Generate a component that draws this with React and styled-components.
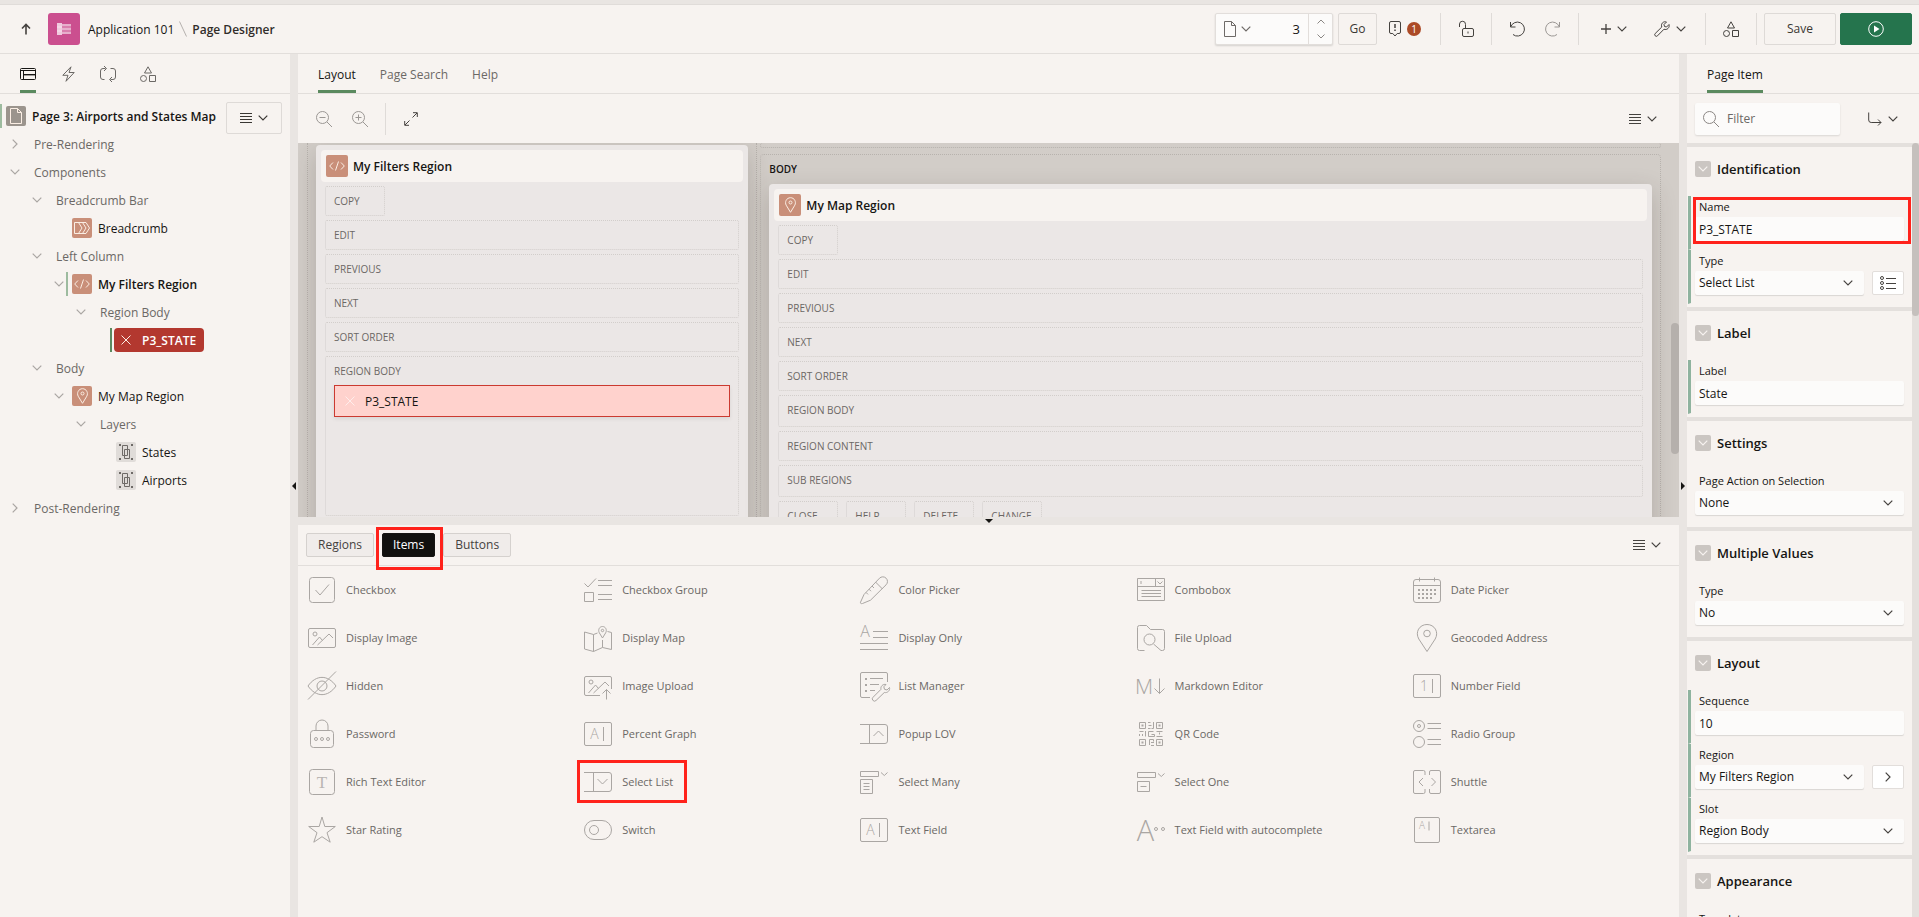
import React from 'react';
import styled, { createGlobalStyle, css } from 'styled-components';

const Global = createGlobalStyle`
  *, *::before, *::after { box-sizing: border-box; }
  html, body, #root { height: 100%; }
  body { margin: 0; overflow: hidden; background: #e9e5e2; }
  body, button, input, select {
    font-family: 'Open Sans', 'Noto Sans', sans-serif;
    font-size: 12px;
    line-height: 16px;
    color: #161513;
  }
  button { background: none; border: 0; padding: 0; cursor: pointer; }
  ul { list-style: none; margin: 0; padding: 0; }
  h2, h3 { margin: 0; }
  svg { display: block; flex: none; overflow: visible; }
`;

/* ---------- icons ---------- */

const Svg = ({ w = 16, h = w, children, sw = 1, ...rest }) => (
  <svg width={w} height={h} viewBox={`0 0 ${w} ${h}`} fill="none" stroke="currentColor" strokeWidth={sw} aria-hidden="true" {...rest}>
    {children}
  </svg>
);

const Chevron = () => <Svg w={10} h={6} sw={1.2}><path d="M.7.7 5 5 9.3.7" /></Svg>;
const ChevronUp = () => <Svg w={8} h={5}><path d="M.5 4.5 4 1l3.500 3.500" /></Svg>;
const ChevronDown = () => <Svg w={8} h={5}><path d="M.5.5 4 4 7.500.5" /></Svg>;
const ChevronRight = () => <Svg w={6} h={10} sw={1.2}><path d="M.7.7 5 5 .7 9.3" /></Svg>;
const Bars = () => <Svg w={12} h={10}><path d="M0 .5h12M0 3.500h12M0 6.500h12M0 9.500h12" /></Svg>;
const ArrowUp = () => <Svg w={10} h={12} sw={1.6}><path d="M5 11.500V1.500M1 5.500l4-4 4 4" /></Svg>;
const AppLogo = () => (
  <Svg w={16} h={12} stroke="none">
    <g fill="#fff">
      <path d="M1 0h5v12H1z" opacity=".7" />
      <path d="M6 1h9v2.500H6zM6 4.500h9v3H6zM6 8.500h9V11H6z" opacity=".55" />
      <path d="M1 3.500h5v1H1zM1 7.500h5v1H1z" opacity=".5" />
    </g>
  </Svg>
);
const Shapes = () => (
  <Svg w={16}>
    <path d="M8 .8 11.500 7h-7z" /><circle cx="3.500" cy="12.500" r="3" /><path d="M9.500 9.500h6v6h-6z" />
  </Svg>
);
const PageLayoutIcon = () => (
  <Svg w={16} h={12}>
    <rect x=".5" y=".5" width="15" height="11" rx="1" /><path d="M.5 2.500h15M3.500 2.500v9M3.500 6.500h12" /><path d="M4 7.500h11.500" opacity=".4" />
  </Svg>
);
const Bolt = () => <Svg w={13} h={16}><path d="M9 .8.8 9.300H6L4 15.300 12.200 6.500H7z" strokeLinejoin="round" /></Svg>;
const Process = () => (
  <Svg w={16}>
    <path d="M5.500 2.500H3a2.500 2.500 0 0 0-2.500 2.500v6A2.500 2.500 0 0 0 3 13.500h1.500M4 0l2.500 2.500L4 5M10.500 13.500H13a2.500 2.500 0 0 0 2.500-2.500V5A2.500 2.500 0 0 0 13 2.500h-2.500M12 11l-2.500 2.500L12 16" />
  </Svg>
);
const PageDoc = ({ w = 12, h = 16 }) => (
  <svg width={w} height={h} viewBox="0 0 12 16" fill="none" stroke="currentColor" aria-hidden="true">
    <path d="M.5.5h7l4 4v11H.5z M7.500.5v4h4" strokeLinejoin="round" />
  </svg>
);
const Comment = () => (
  <Svg w={12} h={16}>
    <path d="M2 .5h8A1.500 1.500 0 0 1 11.500 2v9a1.500 1.500 0 0 1-1.500 1.500H8.200L6 15l-2.200-2.500H2A1.500 1.500 0 0 1 .5 11V2A1.500 1.500 0 0 1 2 .5z" />
    <path d="M6 3v4M6 8.500V10" strokeWidth="1.500" />
  </Svg>
);
const Unlock = () => (
  <Svg w={16}>
    <rect x="4.500" y="7.500" width="11" height="8" rx="1.500" /><path d="M7.500 7.500V3.500a3 3 0 0 0-6-.5v3M10 10.500v2" />
  </Svg>
);
const Undo = () => <Svg w={16}><path d="M1.500 1v5h5M1.800 5.800A7 7 0 1 1 4 13.500" /></Svg>;
const Redo = () => <Svg w={16}><path d="M14.500 1v5h-5M14.200 5.800A7 7 0 1 0 12 13.500" /></Svg>;
const Plus = () => <Svg w={10}><path d="M5 0v10M0 5h10" strokeWidth="1.300" /></Svg>;
const Wrench = () => (
  <Svg w={16}>
    <path d="M15 3.500 12.500 6l-2-.5-.5-2L12.500 1C10 0 7.200 2 7.500 4.800c0 .5.1.8.3 1.200L1.200 12.500a1.600 1.600 0 0 0 2.300 2.300L10 8.200c3 1.300 6-1.700 5-4.700z" strokeLinejoin="round" />
  </Svg>
);
const Play = () => (
  <Svg w={16}><circle cx="8" cy="8" r="7.300" /><path d="M6 4.500v7L11.500 8z" fill="currentColor" stroke="none" /></Svg>
);
const ZoomOut = () => <Svg w={16}><circle cx="6.500" cy="6.500" r="6" /><path d="M3.500 6.500h6M11 11l5 5" /></Svg>;
const ZoomIn = () => <Svg w={16}><circle cx="6.500" cy="6.500" r="6" /><path d="M3.500 6.500h6M6.500 3.500v6M11 11l5 5" /></Svg>;
const Expand = () => <Svg w={14}><path d="M9 .7h4.300V5M13 1 8.500 5.500M5 13.300H.7V9M1 13l4.500-4.500" /></Svg>;
const Search = () => <Svg w={16}><circle cx="6.500" cy="6.500" r="6" /><path d="M11 11l5 5" /></Svg>;
const GoTo = () => <Svg w={14}><path d="M.7.500V8a2.500 2.500 0 0 0 2.500 2.500H13M10 7.500l3 3-3 3" /></Svg>;
const ListIcon = () => (
  <Svg w={16} h={14}>
    <circle cx="2" cy="2" r="1.500" /><circle cx="2" cy="7" r="1.500" /><circle cx="2" cy="12" r="1.500" />
    <path d="M6 2.500h10M6 7.500h10M6 12.500h10" />
  </Svg>
);
const Code = () => <Svg w={16} h={10}><path d="M4 1.500.7 5 4 8.500M12 1.500 15.300 5 12 8.500M9.500.5l-3 9" /></Svg>;
const Crumbs = () => (
  <Svg w={16} h={12}><path d="M.5.5H12L15.500 6 12 11.500H.5zM4.500.5 8 6l-3.500 5.500M8.500.5 12 6l-3.500 5.500" /></Svg>
);
const Pin = () => (
  <Svg w={11} h={16}>
    <path d="M5.500 15.300 1.200 8.200C-.5 5 1.500.7 5.500.7S11.500 5 9.800 8.200z" /><circle cx="5.500" cy="5.500" r="1.500" />
  </Svg>
);
const Layer = () => (
  <Svg w={14} h={16}>
    <path d="M3.500 1.500h5v10h-5zM5.500 5.500h5v9h-5z" />
    <path d="M0 0h2v2H0zM12 0h2v2h-2zM0 14h2v2H0zM12 14h2v2h-2z" fill="currentColor" stroke="none" />
  </Svg>
);
const Cross = () => <Svg w={10}><path d="M.5.5l9 9M9.500.5l-9 9" /></Svg>;

const Glyph = ({ x, y, size, serif, children }) => (
  <text x={x} y={y} fontSize={size} fontFamily={serif ? 'Liberation Serif, serif' : 'Open Sans, sans-serif'} fontWeight="300" fill="currentColor" stroke="none" textAnchor="middle">
    {children}
  </text>
);
const Picture = <><circle cx="9" cy="12" r="2" /><path d="M6.500 23l7-8 3 3.500M11.500 23l11.500-11 4 4" /></>;
const FieldBox = <><rect x="2.500" y="4.500" width="27" height="23" rx="1.500" /><path d="M21.500 9v14" /></>;
const DropBox = <path d="M2 6.500h25a2.500 2.500 0 0 1 2.500 2.500v14a2.500 2.500 0 0 1-2.500 2.500H2M11.500 6.500v19" />;

const itemIcons = {
  'Checkbox': <><rect x="3.500" y="3.500" width="25" height="25" rx="3" /><path d="M9.500 16l4.500 5 9-10.500" /></>,
  'Checkbox Group': <path d="M2.500 9.500 6 13l8-8.500M2.500 18.500h9v9h-9zM16 6.500h14M16 11.500h14M16 20.500h14M16 25.500h14" />,
  'Color Picker': <path d="M2.600 28 6 20.500 21.500 4.200a4.600 4.600 0 0 1 6.600 6.600L12.500 26.200 4.500 29.500c-1.500.5-2.500-.3-1.900-1.500zM17.500 8l7 7M14 12l2 2M11 15.200l2 2M8 18.400l2 2" />,
  'Combobox': <path d="M2.500 4.500h27v22h-27zM2.500 12.500h27M20.500 4.500v8M6 7v3M22.500 7.500l2.500 2.500 2.500-2.500M6.500 16.500h19.500M6.500 19.500h19.500M6.500 22.500h19.500" />,
  'Date Picker': (
    <>
      <rect x="2.500" y="5.500" width="27" height="23" rx="2.500" /><path d="M2.500 11.500h27M8.500 3.500v4M23.500 3.500v4" />
      <path d="M7 16h18M7 20h18M7 24h14" strokeWidth="2" strokeDasharray="2 2" />
    </>
  ),
  'Display Image': <><rect x="2.500" y="6.500" width="27" height="19" rx="1.500" />{Picture}</>,
  'Display Map': (
    <>
      <path d="M2.500 10v17l9 2.500 9-4 9 2v-17l-4-1M2.500 10l9 2.500v17M11.500 12.500l4-1.500M20.500 18v7.500" />
      <path d="M20.500 16l-3.200-5.200c-1.600-3 .2-6.300 3.200-6.300s4.800 3.300 3.200 6.300z" /><circle cx="20.500" cy="8.500" r="1.200" />
    </>
  ),
  'Display Only': <><Glyph x="7" y="15" size="16">A</Glyph><path d="M15 9.500h15M15 15.500h15M2 21.500h28M2 27.500h28" /></>,
  'File Upload': (
    <>
      <path d="M9.500 28.500h-5a2 2 0 0 1-2-2v-21a2 2 0 0 1 2-2h7l4 4h12a2 2 0 0 1 2 2v17a2 2 0 0 1-2 2H26L18.500 22" /><circle cx="14.500" cy="17.500" r="5.500" />
    </>
  ),
  'Geocoded Address': <><path d="M16 29.500 7.800 17C3.800 10 8.500 2.500 16 2.500S28.200 10 24.200 17z" /><circle cx="16" cy="11.500" r="3.300" /></>,
  'Hidden': <><path d="M2 16c8-11.500 20-11.500 28 0-8 11.500-20 11.500-28 0zM2 29.500l28-28" /><circle cx="16" cy="16" r="5" /></>,
  'Image Upload': <><path d="M18 25.500H4a1.500 1.500 0 0 1-1.500-1.500V8A1.500 1.500 0 0 1 4 6.500h24A1.500 1.500 0 0 1 29.500 8v11M24.500 29.500v-10M20.500 23.500l4-4 4 4" /><circle cx="9" cy="12" r="2" /><path d="M6.500 23l7-8 3 3.500M11.500 23l11.500-11 4 4" /></>,
  'List Manager': (
    <>
      <path d="M12 27.500H4A1.500 1.500 0 0 1 2.500 26V4A1.500 1.500 0 0 1 4 2.500h24A1.500 1.500 0 0 1 29.500 4v8M12 8.500h13M12 14.500h9M12 20.500h5" />
      <path d="M7 9h2M7 15h2M7 21h2" strokeWidth="2" />
      <path d="M31.500 17.500 29 20l-2.500-.7-.7-2.500L28 14.500c-3-.8-5.800 2-5 4.800l-8 8a2 2 0 0 0 3 3.200l8.300-8c3 .8 6-2 5.200-5z" strokeLinejoin="round" />
    </>
  ),
  'Markdown Editor': <><Glyph x="9" y="24" size="21">M</Glyph><path d="M24.500 8.500v15M19.500 18.500l5 5 5-5" /></>,
  'Number Field': <>{FieldBox}<Glyph x="13" y="21" size="14">1</Glyph></>,
  'Password': (
    <>
      <rect x="4.500" y="12.500" width="23" height="17" rx="3" /><path d="M10 12.500V8a6 6 0 0 1 12 0v4.500" />
      <circle cx="10" cy="21" r="1.500" /><circle cx="16" cy="21" r="1.500" /><circle cx="22" cy="21" r="1.500" />
    </>
  ),
  'Percent Graph': <>{FieldBox}<Glyph x="12.500" y="21" size="14">A</Glyph></>,
  'Popup LOV': <>{DropBox}<path d="M15.500 18l5-5 5 5" /></>,
  'QR Code': (
    <>
      <path d="M4.500 4.500h6v6h-6zM21.500 4.500h6v6h-6zM4.500 21.500h6v6h-6zM13 4.500h2.500M13 10.500h2.500M18.500 4v6.500h-2M13.500 7.500h3M4.500 13.500h4M4.500 18v-2M7.500 18v-2M10.500 13v5.500M13.500 18.500v-5h5M16.500 16.500h3v2h-6M21.500 13.500h6M21.500 18.500h6M24.500 16.500v-2M14.500 27v-5.500h4v2M16 24.500h3M16 27.500h3" />
      <path d="M6.500 7.500h2M23.500 7.500h2M6.500 24.500h2" strokeWidth="2" /><path d="M21.500 21.500h6v6h-6z" /><path d="M23.500 24.500h2" strokeWidth="2" />
    </>
  ),
  'Radio Group': (
    <>
      <circle cx="8" cy="8" r="5.500" /><circle cx="8" cy="8" r="1.500" /><circle cx="8" cy="24" r="5.500" />
      <path d="M16.500 5.500H30M16.500 10.500H30M16.500 21.500H30M16.500 26.500H30" />
    </>
  ),
  'Rich Text Editor': <><rect x="3.500" y="3.500" width="25" height="25" rx="3" /><g opacity=".8"><Glyph x="16" y="22" size="17" serif>T</Glyph></g></>,
  'Select List': <>{DropBox}<path d="M15.500 13l5 5 5-5" /></>,
  'Select Many': <path d="M2.500 5.500h18v5h-18zM23 6.500l3.300 3 3.200-3M2.500 13.500h12v14h-12zM5.500 17.500h6M5.500 20.500h6M5.500 23.500h6" />,
  'Select One': <path d="M2.500 6.500h18v5h-18zM23 7.500l3.300 3 3.200-3M2.500 15.500h12v10h-12zM5.500 20.500h6" />,
  'Shuttle': <path d="M14 9V6a1.500 1.500 0 0 0-1.500-1.500H4A1.500 1.500 0 0 0 2.500 6v20A1.500 1.500 0 0 0 4 27.500h8.500A1.500 1.500 0 0 0 14 26v-3M18.500 9V6A1.500 1.500 0 0 1 20 4.500h8A1.500 1.500 0 0 1 29.500 6v20a1.500 1.500 0 0 1-1.500 1.500h-8a1.500 1.500 0 0 1-1.500-1.500v-3M12 12l-4 4 4 4M20.500 12l4 4-4 4" />,
  'Star Rating': <path d="M16 3l2.800 9.500h10.500l-8.300 6.200 3.200 9.500-8.200-5.500-8.200 5.500 3.200-9.500-8.300-6.200h10.500z" />,
  'Switch': <><rect x="2.500" y="6.500" width="27" height="19" rx="9.500" /><circle cx="12" cy="16" r="4.500" /></>,
  'Text Field': <>{FieldBox}<Glyph x="12.500" y="21" size="14">A</Glyph></>,
  'Text Field with autocomplete': <><Glyph x="10.500" y="26.500" size="29">A</Glyph><circle cx="21" cy="15" r="1.500" /><circle cx="28" cy="15" r="1.500" /></>,
  'Textarea': <><rect x="3.500" y="3.500" width="25" height="25" rx="1.500" /><Glyph x="11" y="15" size="10">A</Glyph><path d="M18 7.500v9" /></>,
};

/* ---------- shell ---------- */

const Shell = styled.div`
  height: 100vh;
  display: flex;
  flex-direction: column;
  background: #f7f3f0;
  overflow: hidden;
`;
const TopStrip = styled.div`flex: none; height: 5px; background: #e9e5e2; border-bottom: 1px solid #e0dcd9;`;
const Header = styled.header`
  flex: none;
  height: 49px;
  display: flex;
  align-items: center;
  padding: 0 7px 0 12px;
  border-bottom: 1px solid #e2dedb;
`;
const Workspace = styled.div`flex: 1; min-height: 0; display: flex;`;
const Spacer = styled.div`flex: 1;`;

const ToolButton = styled.button`
  width: ${p => p.$w || 36}px;
  height: 32px;
  flex: none;
  display: flex;
  align-items: center;
  justify-content: center;
  gap: 6px;
  color: ${p => (p.$muted ? '#9b9794' : '#45423f')};
`;
const BoxButton = styled(ToolButton)`
  border: 1px solid #dedad7;
  border-radius: 2px;
  color: #3a3733;
  ${p => p.$primary && css`background: #25744d; border-color: #25744d; color: #fff; margin-left: 4px;`}
`;
const AppBadge = styled.span`
  width: 32px; height: 32px; margin: 0 8px;
  display: grid; place-items: center;
  background: #cb4f8f; border-radius: 3px;
`;
const Crumb = styled.a`padding-top: 2px; color: #161513; text-decoration: none;`;
const CrumbSlash = styled.span`width: 18px; display: grid; place-items: center; color: #b5b1ae;`;
const CrumbCurrent = styled.span`padding-top: 2px; font-weight: 600; color: #312d2a;`;

const PagePicker = styled.div`
  width: 118px; height: 32px; margin-right: 5px;
  display: flex; align-items: stretch;
  background: #fcfbfa;
  border: 1px solid #e2dedb; border-radius: 2px;
  box-shadow: 0 1px 2px rgba(0, 0, 0, .14);
`;
const PagePickerMenu = styled.button`width: 42px; display: flex; align-items: center; justify-content: center; gap: 5px; color: #6e6a67;`;
const PageInput = styled.input`
  flex: 1; min-width: 0; border: 0; padding: 0 8px; background: none; outline: 0;
  text-align: right; font-size: 13px;
`;
const Stepper = styled.div`width: 24px; border-left: 1px solid #e2dedb; display: flex; flex-direction: column;`;
const StepButton = styled.button`flex: 1; display: grid; place-items: center; color: #8b8784;`;
const Divider = styled.span`flex: none; width: 1px; height: 32px; margin: 0 7px; background: #dfdbd8;`;
const Count = styled.span`
  width: 14px; height: 14px; border-radius: 50%;
  background: #ac4a26; color: #fff; font-size: 10px; line-height: 14px; text-align: center;
`;

const Splitter = styled.div`
  flex: none;
  display: flex; align-items: center; justify-content: center;
  background: #e9e5e2; color: #161513;
  ${p => (p.$row ? 'height: 8px;' : 'width: 8px;')}
`;

/* ---------- tabs ---------- */

const TabBar = styled.div`
  flex: none; height: 40px;
  display: flex; gap: 24px;
  padding: 0 20px;
  border-bottom: 1px solid #e2dedb;
`;
const Tab = styled.button`
  height: 39px;
  min-width: ${p => (p.$icon ? 16 : 0)}px;
  display: flex; align-items: center; justify-content: center;
  padding-top: ${p => (p.$icon ? 3 : 5)}px;
  border-bottom: 3px solid ${p => (p.$active ? '#5b8a5f' : 'transparent')};
  color: ${p => (p.$active ? '#161513' : '#6b6865')};
`;

/* ---------- tree ---------- */

const Sidebar = styled.aside`flex: none; width: 290px; display: flex; flex-direction: column;`;
const TreeBody = styled.div`position: relative; flex: 1; padding: 8px 0;`;
const TreeMenu = styled(BoxButton)`position: absolute; top: 8px; right: 8px; z-index: 1;`;
const TreeRow = styled.li`
  height: 28px;
  display: flex; align-items: center;
  padding-left: ${p => (p.$level > 0 ? (p.$level - 1) * 22 : 0)}px;
`;
const Toggle = styled.button`
  flex: none; width: 22px; height: 24px; padding-left: 8px;
  display: flex; align-items: center; justify-content: center;
  color: #aaa6a3;
`;
const Node = styled.a`
  height: 24px;
  display: flex; align-items: center; gap: 6px;
  padding-left: ${p => (p.$plain ? 12 : 6)}px;
  color: ${p => (p.$plain ? '#6b6865' : '#161513')};
  font-weight: ${p => (p.$bold ? 600 : 400)};
  text-decoration: none;
  ${p => p.$marked && css`border-left: 2px solid #9dbb9f; padding-left: 4px;`}
  ${p => p.$selected && css`
    border-left-color: #5b8a5f;
    padding-left: 2px;
    color: #fff; font-weight: 600;
  `}
`;
const NodeLabel = styled.span`padding-top: 2px;`;
const Pill = styled.span`
  height: 24px; display: flex; align-items: center; gap: 6px;
  padding: 0 8px 0 2px; border-radius: 4px; background: #b3382f;
`;
const TypeIcon = styled.span`
  flex: none; width: ${p => p.$size || 20}px; height: ${p => p.$size || 20}px;
  display: grid; place-items: center; border-radius: 2px;
  background: ${p => ({ region: '#c98f79', page: '#9b948d', layer: '#e0dcd9', item: 'none' })[p.$kind]};
  color: ${p => (p.$kind === 'layer' ? '#6e6a67' : '#fbeee4')};
`;

const nodeIcons = { page: PageDoc, code: Code, crumbs: Crumbs, pin: Pin, layer: Layer, item: Cross };
const tree = [
  { level: 0, label: 'Page 3: Airports and States Map', icon: 'page', kind: 'page', bold: true, marked: true },
  { level: 1, label: 'Pre-Rendering', closed: true },
  { level: 1, label: 'Components' },
  { level: 2, label: 'Breadcrumb Bar' },
  { level: 3, label: 'Breadcrumb', icon: 'crumbs', kind: 'region', leaf: true },
  { level: 2, label: 'Left Column' },
  { level: 3, label: 'My Filters Region', icon: 'code', kind: 'region', bold: true, marked: true },
  { level: 4, label: 'Region Body' },
  { level: 5, label: 'P3_STATE', icon: 'item', kind: 'item', leaf: true, marked: true, selected: true },
  { level: 2, label: 'Body' },
  { level: 3, label: 'My Map Region', icon: 'pin', kind: 'region' },
  { level: 4, label: 'Layers' },
  { level: 5, label: 'States', icon: 'layer', kind: 'layer', leaf: true },
  { level: 5, label: 'Airports', icon: 'layer', kind: 'layer', leaf: true },
  { level: 1, label: 'Post-Rendering', closed: true },
];

function TreeNode({ n }) {
  const Icon = n.icon && nodeIcons[n.icon];
  const body = <>{Icon && <TypeIcon $kind={n.kind}><Icon /></TypeIcon>}<NodeLabel>{n.label}</NodeLabel></>;
  return (
    <TreeRow $level={n.level}>
      {n.level > 0 && (
        <Toggle aria-label={`Toggle ${n.label}`} tabIndex={-1}>
          {!n.leaf && (n.closed ? <ChevronRight /> : <Chevron />)}
        </Toggle>
      )}
      <Node href="#" $plain={!Icon} $bold={n.bold} $marked={n.marked} $selected={n.selected}>
        {n.selected ? <Pill>{body}</Pill> : body}
      </Node>
    </TreeRow>
  );
}

/* ---------- layout canvas ---------- */

const Center = styled.main`flex: 1; min-width: 0; display: flex; flex-direction: column;`;
const Toolbar = styled.div`
  flex: none; height: ${p => p.$h}px;
  display: flex; align-items: center;
  padding: 0 ${p => p.$right}px 0 8px;
  gap: ${p => p.$gap || 0}px;
  ${p => p.$line && 'border-bottom: 1px solid #e2dedb;'}
`;
const Canvas = styled.section`
  position: relative;
  flex: 374 1 0; min-height: 0; overflow: hidden;
  display: grid; grid-template-columns: 1fr 2fr; gap: 3px;
  padding: 0 18px 0 9px;
  background: #d2cdc8;
`;
const CanvasThumb = styled.span`
  position: absolute; right: 0; top: 180px; width: 8px; height: 131px;
  border-radius: 4px; background: #b5b0ac;
`;
const Column = styled.div`min-width: 0; display: flex; flex-direction: column; gap: 6px;`;
const OuterSlot = styled.div`
  border: 1px dotted #b7b2ad;
  padding: 0 8px;
  ${p => (p.$tail ? 'height: 5px; border-top: 0; border-radius: 0 0 4px 4px;' : 'flex: 1 0 auto;')}
  ${p => p.$open ? 'border-top: 0; border-bottom: 0; padding-top: 2px;' : 'border-radius: 4px;'}
`;
const SlotTitle = styled.div`font-size: 10px; font-weight: 600; line-height: 29px;`;
const Card = styled.article`
  padding: 5px 5px 0;
  height: ${p => p.$h}px;
  border-radius: 4px;
  background: #ebe7e6;
  box-shadow: 0 8px 24px rgba(60, 50, 40, .22);
`;
const CardTitle = styled.h3`
  height: 32px;
  display: flex; align-items: center; gap: 5px;
  padding: 0 5px;
  margin-bottom: 4px;
  background: #f7f3f0; border-radius: 4px;
  font-size: 12px; font-weight: 600;
`;
const Slots = styled.div`display: flex; flex-direction: column; gap: 4px; padding: 0 4px;`;
const SlotRow = styled.div`display: flex; gap: 8px;`;
const Slot = styled.div`
  ${p => p.$small && 'width: 60px;'}
  min-height: ${p => p.$min || 30}px;
  padding: 0 8px;
  border: 1px dotted #d2cecb; border-radius: 2px;
  font-size: 10px; line-height: 28px;
  color: #6b6865;
`;
const CanvasItem = styled.div`
  height: 32px;
  display: flex; align-items: center; gap: 10px;
  padding-left: 10px;
  border: 1px solid #cb3a30; background: #ffd2cd;
  box-shadow: 0 2px 4px rgba(0, 0, 0, .08);
  font-size: 12px; line-height: 16px; color: #161513;
`;
const Faint = styled.span`color: #fff; opacity: .6;`;

/* ---------- item palette ---------- */

const Palette = styled.section`flex: 392 1 0; min-height: 0; display: flex; flex-direction: column;`;
const PaletteTab = styled.button`
  position: relative; height: 24px; padding: 0 ${p => (p.$active ? 10 : 11)}px;
  border: 1px solid ${p => (p.$active ? '#161513' : '#d5d1ce')}; border-radius: 2px;
  background: ${p => (p.$active ? '#11110f' : '#f0ecea')};
  color: ${p => (p.$active ? '#fff' : '#45423f')};
  font-weight: ${p => (p.$active ? 500 : 400)};
`;
const ItemGrid = styled.ul`display: grid; grid-template-columns: repeat(5, 1fr); grid-auto-rows: 48px;`;
const ItemCell = styled.li`
  position: relative;
  display: flex; align-items: center; gap: 8px;
  padding-left: 8px;
  font-size: 11px; color: #6b6865;
  svg { color: #aaa6a3; }
`;
const Highlight = styled.span`
  position: absolute; z-index: 2; pointer-events: none;
  border: 3px solid #ff221b;
  ${p => p.$spot === 'tab' && 'inset: -7px -9px -14px -7px;'}
  ${p => p.$spot === 'item' && 'left: 3px; top: 2px; width: 110px; height: 43px;'}
  ${p => p.$spot === 'field' && 'left: 2px; right: 1px; top: 1px; height: 47px;'}
`;

const items = [
  'Checkbox', 'Checkbox Group', 'Color Picker', 'Combobox', 'Date Picker',
  'Display Image', 'Display Map', 'Display Only', 'File Upload', 'Geocoded Address',
  'Hidden', 'Image Upload', 'List Manager', 'Markdown Editor', 'Number Field',
  'Password', 'Percent Graph', 'Popup LOV', 'QR Code', 'Radio Group',
  'Rich Text Editor', 'Select List', 'Select Many', 'Select One', 'Shuttle',
  'Star Rating', 'Switch', 'Text Field', 'Text Field with autocomplete', 'Textarea',
];

/* ---------- property editor ---------- */

const Properties = styled.aside`flex: none; width: 232px; display: flex; flex-direction: column;`;
const FilterRow = styled.div`flex: none; height: 49px; display: flex; align-items: center; padding: 0 18px 0 8px; justify-content: space-between;`;
const FilterBox = styled.label`
  width: 145px; height: 32px;
  display: flex; align-items: center; gap: 8px; padding: 0 8px;
  background: #fcfbfa; border-radius: 2px; color: #8b8784;
  box-shadow: 0 1px 2px rgba(0, 0, 0, .12);
  input { flex: 1; min-width: 0; border: 0; padding: 0; background: none; outline: 0; }
  input::placeholder { color: #6b6865; opacity: 1; }
`;
const PropScroll = styled.div`flex: 1; min-height: 0; display: flex; overflow: hidden;`;
const Groups = styled.div`flex: 1; min-width: 0; overflow: hidden;`;
const ScrollTrack = styled.div`flex: none; width: 7px; background: #e4e0dd;`;
const ScrollThumb = styled.div`height: 173px; border-radius: 4px; background: #c5c0bd;`;
const Group = styled.section`border-top: 4px solid #e4e0dd; padding-bottom: 3px;`;
const GroupHead = styled.h2`
  height: 44px; margin-bottom: 5px; padding-left: 8px;
  display: flex; align-items: center; gap: 6px;
  font-size: 13px; font-weight: 600; line-height: 20px;
`;
const Collapse = styled.button`
  width: 16px; height: 16px; display: grid; place-items: center;
  background: #cbc6c2; border-radius: 2px; color: #f7f3f0;
`;
const FieldWrap = styled.div`
  position: relative;
  height: 54px;
  margin-left: 1px;
  padding: 2px 8px 0 4px;
  border-left: 3px solid ${p => (p.$changed ? '#8fb39f' : 'transparent')};
  border-bottom: 1px solid #f7f3f0;
`;
const FieldLabel = styled.label`display: block; padding-left: 4px; font-size: 11px; line-height: 17px; margin-bottom: 2px;`;
const FieldLine = styled.div`display: flex; gap: 8px;`;
const controlStyle = css`
  width: 100%; height: 24px; padding: 0 4px; border: 0; outline: 0; border-radius: 2px;
  background: #fcfbfa; box-shadow: 0 1px 1px rgba(0, 0, 0, .12);
  appearance: none;
`;
const TextInput = styled.input`${controlStyle}`;
const SelectBox = styled.div`
  flex: 1; display: grid; align-items: center; color: #45423f;
  > * { grid-area: 1 / 1; }
  svg { justify-self: end; margin-right: 11px; pointer-events: none; z-index: 1; }
`;
const Select = styled.select`${controlStyle}`;
const SideButton = styled.button`
  flex: none; width: 32px; height: 24px; display: grid; place-items: center;
  background: #fff; border: 1px solid #e2dedb; border-radius: 2px; color: #45423f;
`;

const groups = [
  { title: 'Identification', fields: [
    { label: 'Name', value: 'P3_STATE', changed: true, mark: true },
    { label: 'Type', value: 'Select List', select: true, changed: true, side: 'list' },
  ] },
  { title: 'Label', fields: [{ label: 'Label', value: 'State', changed: true }] },
  { title: 'Settings', fields: [{ label: 'Page Action on Selection', value: 'None', select: true }] },
  { title: 'Multiple Values', fields: [{ label: 'Type', value: 'No', select: true }] },
  { title: 'Layout', fields: [
    { label: 'Sequence', value: '10', changed: true },
    { label: 'Region', value: 'My Filters Region', select: true, changed: true, side: 'go' },
    { label: 'Slot', value: 'Region Body', select: true, changed: true },
  ] },
  { title: 'Appearance', fields: [{ label: 'Template', value: 'Optional - Floating', select: true }] },
];

function Field({ id, f }) {
  return (
    <FieldWrap $changed={f.changed}>
      <FieldLabel htmlFor={id}>{f.label}</FieldLabel>
      <FieldLine>
        {f.select ? (
          <SelectBox><Select id={id} defaultValue={f.value}><option>{f.value}</option></Select><Chevron /></SelectBox>
        ) : (
          <TextInput id={id} defaultValue={f.value} />
        )}
        {f.side && <SideButton aria-label={`Open ${f.label}`}>{f.side === 'list' ? <ListIcon /> : <ChevronRight />}</SideButton>}
      </FieldLine>
      {f.mark && <Highlight $spot="field" />}
    </FieldWrap>
  );
}

const MenuButton = ({ label }) => <ToolButton $w={32} aria-label={label}><Bars /><Chevron /></ToolButton>;

export default function App() {
  return (
    <Shell>
      <Global />
      <TopStrip />
      <Header>
        <ToolButton $w={28} aria-label="Up"><ArrowUp /></ToolButton>
        <AppBadge><AppLogo /></AppBadge>
        <Crumb href="#">Application 101</Crumb>
        <CrumbSlash><Svg w={8} h={16}><path d="M.5.5l7 15" /></Svg></CrumbSlash>
        <CrumbCurrent>Page Designer</CrumbCurrent>
        <Spacer />
        <PagePicker>
          <PagePickerMenu aria-label="Page selector"><PageDoc /><Chevron /></PagePickerMenu>
          <PageInput aria-label="Page number" defaultValue="3" />
          <Stepper>
            <StepButton aria-label="Next page"><ChevronUp /></StepButton>
            <StepButton aria-label="Previous page"><ChevronDown /></StepButton>
          </Stepper>
        </PagePicker>
        <BoxButton $w={39}>Go</BoxButton>
        <ToolButton $w={56} aria-label="Messages"><Comment /><Count>1</Count></ToolButton>
        <Divider />
        <ToolButton aria-label="Lock"><Unlock /></ToolButton>
        <Divider />
        <ToolButton aria-label="Undo"><Undo /></ToolButton>
        <ToolButton aria-label="Redo" $muted><Redo /></ToolButton>
        <Divider />
        <ToolButton $w={56} aria-label="Create"><Plus /><Chevron /></ToolButton>
        <ToolButton $w={56} aria-label="Utilities"><Wrench /><Chevron /></ToolButton>
        <Divider />
        <ToolButton aria-label="Shared Components"><Shapes /></ToolButton>
        <Divider />
        <BoxButton $w={72}>Save</BoxButton>
        <BoxButton $w={72} $primary aria-label="Save and Run Page"><Play /></BoxButton>
      </Header>

      <Workspace>
        <Sidebar>
          <TabBar>
            <Tab $active $icon aria-label="Rendering"><PageLayoutIcon /></Tab>
            <Tab $icon aria-label="Dynamic Actions"><Bolt /></Tab>
            <Tab $icon aria-label="Processing"><Process /></Tab>
            <Tab $icon aria-label="Page Shared Components"><Shapes /></Tab>
          </TabBar>
          <TreeBody>
            <TreeMenu $w={56} aria-label="Tree menu"><Bars /><Chevron /></TreeMenu>
            <ul>{tree.map((n, i) => <TreeNode key={i} n={n} />)}</ul>
          </TreeBody>
        </Sidebar>

        <Splitter><Svg w={4} h={8}><path d="M4 0v8L0 4z" fill="currentColor" stroke="none" /></Svg></Splitter>

        <Center>
          <TabBar>
            <Tab $active>Layout</Tab>
            <Tab>Page Search</Tab>
            <Tab>Help</Tab>
          </TabBar>
          <Toolbar $h={49} $right={20}>
            <ToolButton $muted aria-label="Zoom out"><ZoomOut /></ToolButton>
            <ToolButton $muted aria-label="Zoom in"><ZoomIn /></ToolButton>
            <Divider />
            <ToolButton aria-label="Expand"><Expand /></ToolButton>
            <Spacer />
            <MenuButton label="Layout menu" />
          </Toolbar>
          <Canvas>
            <Column>
              <OuterSlot $open>
                <Card $h={400}>
                  <CardTitle><TypeIcon $kind="region" $size={22}><Code /></TypeIcon><NodeLabel>My Filters Region</NodeLabel></CardTitle>
                  <Slots>
                    <Slot $small>COPY</Slot>
                    <Slot>EDIT</Slot>
                    <Slot>PREVIOUS</Slot>
                    <Slot>NEXT</Slot>
                    <Slot>SORT ORDER</Slot>
                    <Slot $min={160}>
                      REGION BODY
                      <CanvasItem><Faint><Cross /></Faint><NodeLabel>P3_STATE</NodeLabel></CanvasItem>
                    </Slot>
                  </Slots>
                </Card>
              </OuterSlot>
            </Column>
            <Column>
              <OuterSlot $tail />
              <OuterSlot>
                <SlotTitle>BODY</SlotTitle>
                <Card $h={400}>
                  <CardTitle><TypeIcon $kind="region" $size={22}><Pin /></TypeIcon><NodeLabel>My Map Region</NodeLabel></CardTitle>
                  <Slots>
                    <Slot $small>COPY</Slot>
                    <Slot>EDIT</Slot>
                    <Slot>PREVIOUS</Slot>
                    <Slot>NEXT</Slot>
                    <Slot>SORT ORDER</Slot>
                    <Slot $min={32}>REGION BODY</Slot>
                    <Slot>REGION CONTENT</Slot>
                    <Slot $min={32}>SUB REGIONS</Slot>
                    <SlotRow>
                      <Slot $small>CLOSE</Slot>
                      <Slot $small>HELP</Slot>
                      <Slot $small>DELETE</Slot>
                      <Slot $small>CHANGE</Slot>
                    </SlotRow>
                  </Slots>
                </Card>
              </OuterSlot>
            </Column>
            <CanvasThumb />
          </Canvas>

          <Splitter $row><Svg w={8} h={4}><path d="M0 0h8L4 4z" fill="currentColor" stroke="none" /></Svg></Splitter>

          <Palette>
            <Toolbar $h={41} $right={16} $gap={8} $line>
              <PaletteTab>Regions</PaletteTab>
              <PaletteTab $active>Items<Highlight $spot="tab" /></PaletteTab>
              <PaletteTab>Buttons</PaletteTab>
              <Spacer />
              <MenuButton label="Gallery menu" />
            </Toolbar>
            <ItemGrid>
              {items.map(name => (
                <ItemCell key={name}>
                  <Svg w={32}>{itemIcons[name]}</Svg>
                  {name}
                  {name === 'Select List' && <Highlight $spot="item" />}
                </ItemCell>
              ))}
            </ItemGrid>
          </Palette>
        </Center>

        <Splitter><Svg w={4} h={8}><path d="M0 0v8l4-4z" fill="currentColor" stroke="none" /></Svg></Splitter>

        <Properties>
          <TabBar><Tab $active>Page Item</Tab></TabBar>
          <FilterRow>
            <FilterBox><Search /><input placeholder="Filter" aria-label="Filter" /></FilterBox>
            <ToolButton aria-label="Go to group"><GoTo /><Chevron /></ToolButton>
          </FilterRow>
          <PropScroll>
            <Groups>
              {groups.map((g, gi) => (
                <Group key={g.title}>
                  <GroupHead><Collapse aria-label={`Collapse ${g.title}`}><Chevron /></Collapse>{g.title}</GroupHead>
                  {g.fields.map((f, fi) => <Field key={fi} id={`f-${gi}-${fi}`} f={f} />)}
                </Group>
              ))}
            </Groups>
            <ScrollTrack><ScrollThumb /></ScrollTrack>
          </PropScroll>
        </Properties>
      </Workspace>
    </Shell>
  );
}
